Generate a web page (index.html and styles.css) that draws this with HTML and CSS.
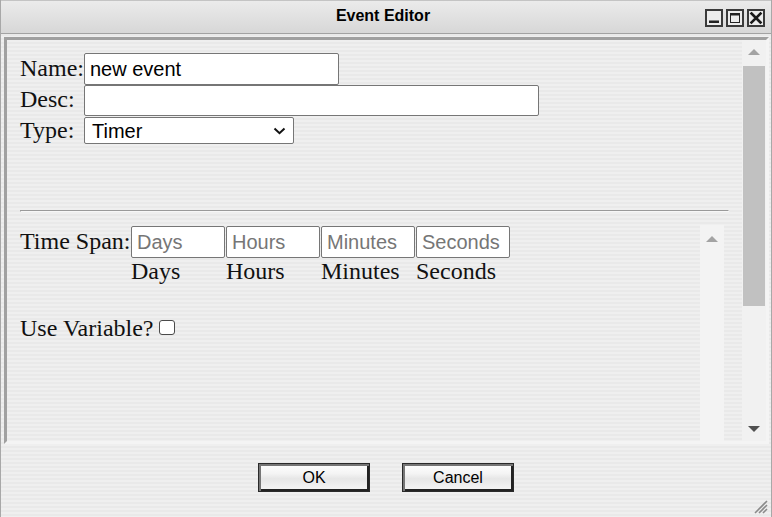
FILE: index.html
```html
<!DOCTYPE html>
<html>
<head>
<meta charset="utf-8">
<title>Event Editor</title>
<link rel="stylesheet" href="styles.css">
</head>
<body>
<div class="window">
  <div class="titlebar">
    <div class="title">Event Editor</div>
    <div class="winbtns">
      <svg class="winbtn" width="18" height="18" viewBox="0 0 18 18"><rect x="1" y="1" width="16" height="16" fill="#ececec" stroke="#3a3a3a" stroke-width="2"/><rect x="4" y="11.5" width="10" height="2.5" fill="#222"/></svg>
      <svg class="winbtn" width="18" height="18" viewBox="0 0 18 18"><rect x="1" y="1" width="16" height="16" fill="#ececec" stroke="#3a3a3a" stroke-width="2"/><rect x="4.5" y="4.5" width="9" height="9" fill="none" stroke="#222" stroke-width="1"/><rect x="4" y="4" width="10" height="2.5" fill="#222"/></svg>
      <svg class="winbtn" width="18" height="18" viewBox="0 0 18 18"><rect x="1" y="1" width="16" height="16" fill="#ececec" stroke="#3a3a3a" stroke-width="2"/><path d="M4.5 4.5 L13.5 13.5 M13.5 4.5 L4.5 13.5" stroke="#1a1a1a" stroke-width="2.6" stroke-linecap="square"/></svg>
    </div>
  </div>

  <div class="panel">
    <div class="main">
      <div class="form">
        <label class="lbl">Name:</label>
        <input class="field name" type="text" value="new event">
        <label class="lbl">Desc:</label>
        <input class="field desc" type="text" value="">
        <label class="lbl">Type:</label>
        <div class="select"><span>Timer</span><svg width="13" height="8" viewBox="0 0 13 8"><path d="M1.5 1.5 L6.5 6.2 L11.5 1.5" fill="none" stroke="#111" stroke-width="2"/></svg></div>
      </div>
      <hr class="sep">
      <div class="inner">
        <div class="inner-content">
          <div class="span-grid">
            <span class="lbl">Time Span:</span>
            <input class="field unit" type="text" placeholder="Days">
            <input class="field unit" type="text" placeholder="Hours">
            <input class="field unit" type="text" placeholder="Minutes">
            <input class="field unit" type="text" placeholder="Seconds">
            <span></span>
            <span class="unit-lbl">Days</span>
            <span class="unit-lbl">Hours</span>
            <span class="unit-lbl">Minutes</span>
            <span class="unit-lbl">Seconds</span>
          </div>
          <div class="usevar"><span class="lbl">Use Variable?</span><input class="chk" type="checkbox"></div>
        </div>
        <div class="vscroll inner-scroll">
          <div class="sbtn"><span class="arrow-up light"></span></div>
        </div>
      </div>
    </div>
    <div class="vscroll outer-scroll">
      <div class="sbtn"><span class="arrow-up light"></span></div>
      <div class="thumb"></div>
      <div class="track-space"></div>
      <div class="sbtn"><span class="arrow-down"></span></div>
    </div>
  </div>

  <div class="footer">
    <button class="btn">OK</button>
    <button class="btn">Cancel</button>
  </div>

  <svg class="grip" width="16" height="16" viewBox="0 0 16 16"><path d="M15 3 L3 15 M15 7 L7 15 M15 11 L11 15" stroke="#8a8a8a" stroke-width="1.6"/></svg>
</div>
</body>
</html>
```

FILE: styles.css
```css
* { box-sizing: border-box; }

html, body {
  margin: 0;
  padding: 0;
}

body {
  width: 772px;
  height: 517px;
  overflow: hidden;
  font-family: "Liberation Serif", "Times New Roman", serif;
}

.window {
  position: relative;
  width: 772px;
  height: 517px;
  display: flex;
  flex-direction: column;
  border-left: 1px solid #a8a8a8;
  border-right: 1px solid #a8a8a8;
  background: repeating-linear-gradient(to bottom, #efefef 0 2px, #e9e9e9 2px 4px);
}

.titlebar {
  height: 34px;
  flex: none;
  display: grid;
  grid-template-columns: 1fr auto 1fr;
  align-items: center;
  background: linear-gradient(#ebebeb, #d7d7d7);
  border-top: 1px solid #c4c4c4;
  border-bottom: 1px solid #a2a2a2;
  padding-right: 6px;
}

.title {
  grid-column: 2;
  font-family: "Liberation Sans", Arial, sans-serif;
  font-weight: bold;
  font-size: 16px;
  color: #000;
  padding-bottom: 2px;
}

.winbtns {
  grid-column: 3;
  justify-self: end;
  display: flex;
  gap: 3px;
  margin-top: 2px;
}

.winbtn { display: block; }

.panel {
  flex: none;
  height: 407px;
  margin: 3px 2px 0 3px;
  border: 3px solid;
  border-color: #a0a0a0 #f4f4f4 #f4f4f4 #a0a0a0;
  display: flex;
}

.main {
  flex: 1;
  min-width: 0;
  overflow: hidden;
  padding: 13px 13px 0 13px;
}

.form {
  display: grid;
  grid-template-columns: 64px auto;
  justify-items: start;
  align-items: baseline;
}

.lbl {
  font-family: "Liberation Serif", "Times New Roman", serif;
  font-size: 24px;
  color: #111;
  white-space: nowrap;
}

.field {
  font-family: "Liberation Sans", Arial, sans-serif;
  font-size: 20px;
  color: #000;
  background: #fff;
  border: 1px solid #767676;
  border-radius: 2px;
  padding: 0 5px;
  margin: 0;
  outline: none;
}

.field::placeholder { color: #767676; }

.name { width: 255px; height: 32px; }
.desc { width: 455px; height: 31px; }

.select {
  width: 210px;
  height: 27px;
  margin-top: 1px;
  display: flex;
  align-items: center;
  justify-content: space-between;
  padding: 1px 7px 0 7px;
  background: #fff;
  border: 1px solid #767676;
  border-radius: 2px;
  font-family: "Liberation Sans", Arial, sans-serif;
  font-size: 20px;
  color: #000;
}

.sep {
  margin: 66px 0 0 0;
  height: 0;
  border: 1px solid;
  border-color: #9a9a9a #f7f7f7 #f7f7f7 #9a9a9a;
}

.inner {
  margin: 13px 5px 0 0;
  height: 230px;
  display: flex;
}

.inner-content {
  flex: 1;
  min-width: 0;
  padding-top: 1px;
}

.span-grid {
  display: grid;
  grid-template-columns: 110px repeat(4, 94px);
  column-gap: 1px;
  align-items: baseline;
}

.unit { width: 94px; height: 32px; }

.unit-lbl {
  font-family: "Liberation Serif", "Times New Roman", serif;
  font-size: 24px;
  line-height: 24px;
  color: #111;
  margin-top: 1px;
  white-space: nowrap;
}

.usevar {
  display: flex;
  align-items: center;
  margin-top: 32px;
}

.chk {
  appearance: none;
  -webkit-appearance: none;
  width: 16px;
  height: 15px;
  margin: 0 0 3px 5px;
  background: #fff;
  border: 1px solid #4a4a4a;
  border-radius: 3px;
}

.vscroll {
  flex: none;
  width: 24px;
  display: flex;
  flex-direction: column;
}

.inner-scroll { background: #f3f3f3; }

.outer-scroll {
  background: #f1f1f1;
  padding: 0 1px 0 1px;
}

.sbtn {
  height: 24px;
  flex: none;
  display: flex;
  align-items: center;
  justify-content: center;
}

.inner-scroll .sbtn { height: 28px; }

.arrow-up {
  width: 0;
  height: 0;
  border-left: 6px solid transparent;
  border-right: 6px solid transparent;
  border-bottom: 6px solid #a3a3a3;
}

.arrow-down {
  width: 0;
  height: 0;
  border-left: 6px solid transparent;
  border-right: 6px solid transparent;
  border-top: 6px solid #505050;
}

.thumb {
  flex: none;
  height: 240px;
  margin-top: 2px;
  background: #c1c1c1;
}

.track-space { flex: 1; }

.footer {
  display: flex;
  justify-content: center;
  gap: 32px;
  padding-top: 19px;
}

.btn {
  width: 112px;
  height: 29px;
  margin: 0;
  padding: 0;
  font-family: "Liberation Sans", Arial, sans-serif;
  font-size: 16px;
  color: #000;
  border: 1px solid #2a2a2a;
  box-shadow: inset 2px 2px 0 #767676, inset -2px -2px 0 #222;
  background: linear-gradient(#ffffff 0%, #f4f4f4 35%, #e6e6e6 55%, #f6f6f6 100%);
}

.grip {
  position: absolute;
  right: 3px;
  bottom: 3px;
}
```
